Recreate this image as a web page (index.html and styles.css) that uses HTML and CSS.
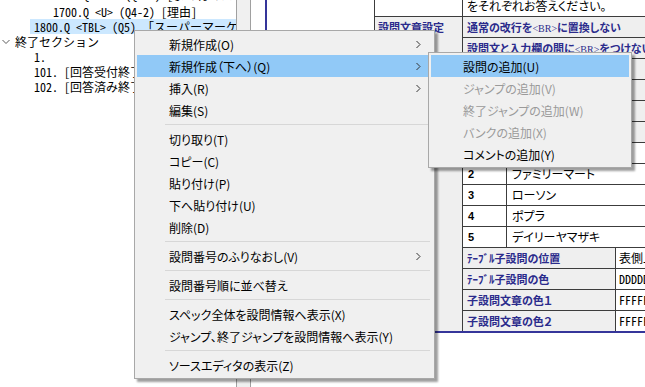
FILE: index.html
```html
<!DOCTYPE html>
<html lang="ja">
<head>
<meta charset="utf-8">
<title>設問エディタ</title>
<link rel="stylesheet" href="styles.css">
</head>
<body>
<div class="app">
  <div class="tree">
    <div class="node lv2 first">1600.Q &lt;SA&gt; (Q4-1) [よく行くスーパー]</div>
    <div class="node lv2">1700.Q &lt;U&gt; (Q4-2) [理由]</div>
    <div class="node lv1 selected">1800.Q &lt;TBL&gt; (Q5) 「スーパーマーケット」</div>
    <div class="node lv0"><svg class="chev" width="8" height="6" viewBox="0 0 8 6"><polyline points="0.5,1 4,4.5 7.5,1" fill="none" stroke="#5a5a5a" stroke-width="1"/></svg>終了セクション</div>
    <div class="node lv1">1.</div>
    <div class="node lv1">101. [回答受付終了]</div>
    <div class="node lv1">102. [回答済み終了]</div>
  </div>
  <div class="splitter"></div>
  <div class="detail">
    <div class="frame">
      <div class="grid">
        <div class="c"></div>
        <div class="c s3">をそれぞれお答えください。</div>

        <div class="c g lab head r6">設問文章設定</div>
        <div class="c g lab s3">通常の改行を<span class="br">&lt;BR&gt;</span>に置換しない</div>
        <div class="c g lab s3">設問文と入力欄の間に<span class="br">&lt;BR&gt;</span>をつけない</div>
        <div class="c g lab s3">設問文を太字にしない</div>
        <div class="c g lab s3">選択肢を横に並べる</div>
        <div class="c g lab s3">選択肢の間に<span class="br">&lt;BR&gt;</span>を入れない</div>
        <div class="c g lab s3">必須回答にしない</div>

        <div class="c g lab head r9">選択肢</div>
        <div class="c num">1</div><div class="c name s2">セブンイレブン</div>
        <div class="c num">2</div><div class="c name s2">ファミリーマート</div>
        <div class="c num">3</div><div class="c name s2">ローソン</div>
        <div class="c num">4</div><div class="c name s2">ポプラ</div>
        <div class="c num">5</div><div class="c name s2">デイリーヤマザキ</div>

        <div class="c g lab s2">ﾃｰﾌﾞﾙ子設問の位置</div><div class="c val">表側上部</div>
        <div class="c g lab s2">ﾃｰﾌﾞﾙ子設問の色</div><div class="c val mono">DDDDDD</div>
        <div class="c g lab s2">子設問文章の色１</div><div class="c val mono">FFFFFF</div>
        <div class="c g lab s2">子設問文章の色２</div><div class="c val mono">FFFFFF</div>
      </div>
    </div>
  </div>
</div>

<div class="menu main-menu">
  <div class="item"><span>新規作成(O)</span><svg class="arr" width="5" height="9" viewBox="0 0 5 9"><polyline points="0.5,1 4,4.5 0.5,8" fill="none" stroke="#333" stroke-width="1"/></svg></div>
  <div class="item hot"><span>新規作成（下へ）(Q)</span><svg class="arr" width="5" height="9" viewBox="0 0 5 9"><polyline points="0.5,1 4,4.5 0.5,8" fill="none" stroke="#333" stroke-width="1"/></svg></div>
  <div class="item"><span>挿入(R)</span><svg class="arr" width="5" height="9" viewBox="0 0 5 9"><polyline points="0.5,1 4,4.5 0.5,8" fill="none" stroke="#333" stroke-width="1"/></svg></div>
  <div class="item"><span>編集(S)</span></div>
  <div class="sep"></div>
  <div class="item"><span>切り取り(T)</span></div>
  <div class="item"><span>コピー(C)</span></div>
  <div class="item"><span>貼り付け(P)</span></div>
  <div class="item"><span>下へ貼り付け(U)</span></div>
  <div class="item"><span>削除(D)</span></div>
  <div class="sep"></div>
  <div class="item"><span>設問番号のふりなおし(V)</span><svg class="arr" width="5" height="9" viewBox="0 0 5 9"><polyline points="0.5,1 4,4.5 0.5,8" fill="none" stroke="#333" stroke-width="1"/></svg></div>
  <div class="sep"></div>
  <div class="item"><span>設問番号順に並べ替え</span></div>
  <div class="sep"></div>
  <div class="item"><span>スペック全体を設問情報へ表示(X)</span></div>
  <div class="item"><span>ジャンプ、終了ジャンプを設問情報へ表示(Y)</span></div>
  <div class="sep"></div>
  <div class="item"><span>ソースエディタの表示(Z)</span></div>
</div>

<div class="menu sub-menu">
  <div class="item hot"><span>設問の追加(U)</span></div>
  <div class="item dis"><span>ジャンプの追加(V)</span></div>
  <div class="item dis"><span>終了ジャンプの追加(W)</span></div>
  <div class="item dis"><span>バンクの追加(X)</span></div>
  <div class="item"><span>コメントの追加(Y)</span></div>
</div>
</body>
</html>
```

FILE: styles.css
```css
* { box-sizing: border-box; }
html, body { margin: 0; padding: 0; }
body {
  width: 645px;
  height: 387px;
  overflow: hidden;
  position: relative;
  background: #fff;
  font-family: "Noto Sans CJK JP", sans-serif;
  color: #000;
}
.app { display: flex; height: 387px; }

/* tree */
.tree {
  width: 237px;
  flex: none;
  border-right: 1px solid #a0a0a0;
  overflow: hidden;
  font-size: 12px;
  line-height: 15px;
  font-feature-settings: "hwid";
}
.node { height: 15px; white-space: nowrap; padding-left: 4px; }
.node.first { margin-top: -11px; line-height: 12px; }
.lv2 { margin-left: 49px; }
.lv1 { margin-left: 30px; }
.lv0 { display: flex; align-items: center; padding-left: 2px; }
.chev { flex: none; margin-right: 5px; }
.selected { background: #cce8ff; }

.splitter {
  width: 14px;
  flex: none;
  background: #f0f0f0;
  border-right: 1px solid #a0a0a0;
}

/* detail */
.detail { flex: 1; min-width: 0; overflow: hidden; padding-left: 14px; }
.frame {
  display: flow-root;
  border-left: 2px solid #35359a;
  border-bottom: 2px solid #35359a;
}
.grid {
  margin: -4px 0 0 107px;
  width: max-content;
  display: grid;
  grid-template-columns: 87px 43px 108px 200px;
  grid-auto-rows: 20px;
  gap: 1px;
  background: #3c3c3c;
  border-left: 1px solid #3c3c3c;
}
.c {
  background: #fff;
  font-size: 12px;
  line-height: 20px;
  padding-left: 4px;
  white-space: nowrap;
  overflow: hidden;
  font-feature-settings: "palt";
}
.g { background: #efefef; }
.lab { color: #2b2b8c; font-weight: bold; font-size: 11px; }
.head { padding-left: 3px; }
.s3 { grid-column: span 3; }
.s2 { grid-column: span 2; }
.r6 { grid-row: span 6; }
.r9 { grid-row: span 9; }
.num { padding-left: 5px; font: bold 11px/20px "Liberation Sans", sans-serif; }
.name { padding-left: 5px; }
.val { padding-left: 3px; }
.mono { font-feature-settings: "hwid"; }
.br { font: normal 10px "Liberation Serif", serif; }

/* context menus */
.menu {
  position: absolute;
  background: #f0f0f0;
  border: 1px solid #a8a8a8;
  padding: 2px;
  box-shadow: 3px 3px 2px rgba(0, 0, 0, 0.38);
  font-size: 12px;
  font-feature-settings: "palt";
  color: #000;
}
.main-menu { left: 134px; top: 30px; width: 301px; }
.sub-menu { left: 428px; top: 52px; width: 204px; }
.item {
  height: 22px;
  display: flex;
  align-items: center;
  justify-content: space-between;
  padding: 0 11px 0 32px;
  white-space: nowrap;
}
.item.hot { background: #91c9f7; }
.item.dis { color: #9a9a9a; }
.arr { flex: none; }
.sep {
  height: 7px;
  display: flex;
  align-items: center;
  padding: 0 2px 0 28px;
}
.sep::after {
  content: "";
  flex: 1;
  height: 1px;
  background: #d7d7d7;
}
```
